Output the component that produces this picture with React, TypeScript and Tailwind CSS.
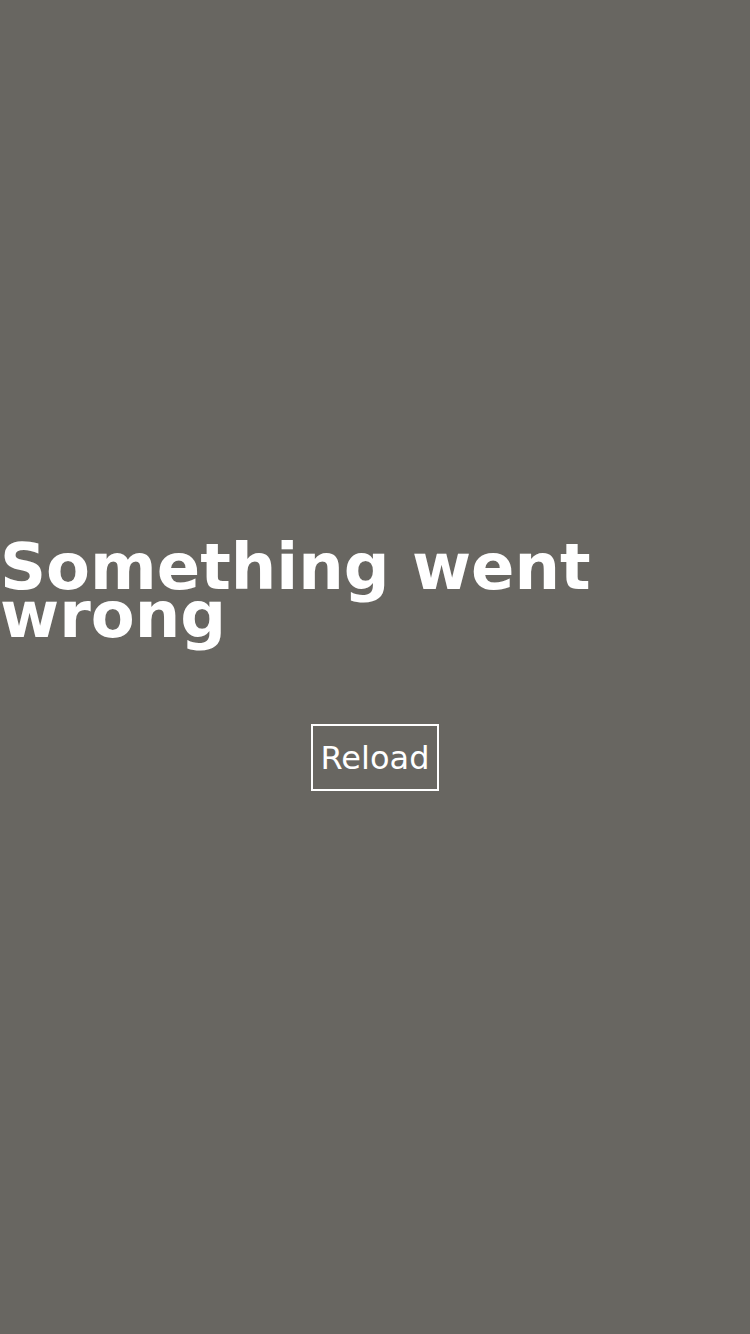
export default function App() {
  return (
    <div className="flex min-h-screen flex-col justify-center bg-[#686661] text-white [font-family:'DejaVu_Sans',sans-serif]">
      <h1 className="m-0 text-[64px] font-bold leading-[48px]">Something went wrong</h1>
      <button
        onClick={() => window.location.reload()}
        className="mx-auto mt-[85px] border-2 border-white px-[8px] pt-[14px] pb-[12px] text-[32px] leading-[37px]"
      >
        Reload
      </button>
    </div>
  );
}
